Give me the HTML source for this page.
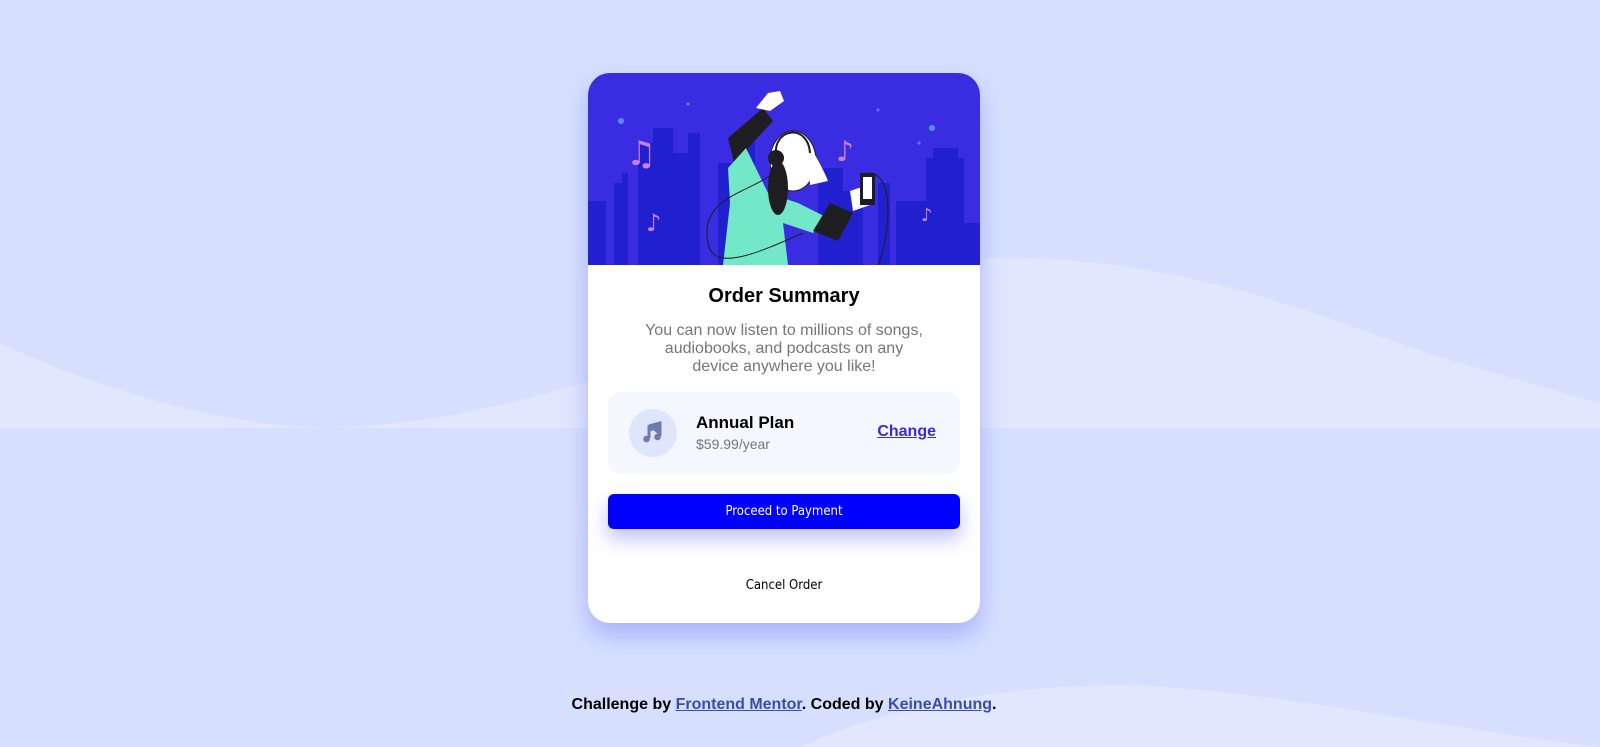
<!DOCTYPE html>
<html><head><meta charset="utf-8"><style>
html,body{margin:0;padding:0}
body{width:1600px;height:747px;background:#d6e0fe;position:relative;overflow:hidden;font-family:"Liberation Sans",sans-serif}
svg.bg{position:absolute;left:0;top:0}
.card{position:absolute;left:588px;top:73px;width:392px;height:550px;background:#fff;border-radius:22px;overflow:hidden;box-shadow:0 12px 24px rgba(90,90,240,0.35)}
.hero{position:absolute;left:0;top:0;width:392px;height:192px}
h1{position:absolute;top:212px;left:0;width:392px;text-align:center;margin:0;font-size:20px;font-weight:bold;color:#000}
.desc{position:absolute;top:249px;left:56px;width:280px;text-align:center;font-size:16px;line-height:18px;color:#767676}
.plan{position:absolute;left:20px;top:319px;width:352px;height:82px;background:#f5f7ff;border-radius:13px}
.ic{position:absolute;left:21px;top:17px;width:48px;height:48px;border-radius:50%;background:#dfe6fb}
.pt{position:absolute;left:88px;top:21px;font-size:17px;font-weight:bold;color:#000}
.pp{position:absolute;left:88px;top:44px;font-size:14px;color:#767676}
.ch{position:absolute;right:24px;top:31px;font-size:16px;font-weight:bold;color:#3a2ad6;text-decoration:underline}
.btn{position:absolute;left:20px;top:421px;width:352px;height:35px;background:#0000ff;border-radius:6px;color:#fff;font-size:13px;text-align:center;line-height:35px;box-shadow:0 10px 20px rgba(0,0,255,0.25);font-family:"DejaVu Sans Condensed","DejaVu Sans",sans-serif}
.cancel{position:absolute;left:0;top:505px;width:392px;text-align:center;font-size:13px;color:#000;font-family:"DejaVu Sans Condensed","DejaVu Sans",sans-serif}
.foot{position:absolute;top:696px;left:0;width:1568px;text-align:center;font-size:16px;font-weight:bold;color:#000}
.foot a{color:#3a4da8;text-decoration:underline}
</style></head><body>
<svg class="bg" width="1600" height="747">
<path d="M0 343 C120 400 250 428 330 428 L0 428Z" fill="#e0e7fe"/>
<path d="M330 428 C600 420 850 260 1000 258 C1200 256 1350 330 1450 360 C1520 380 1570 395 1600 403 L1600 428 Z" fill="#e0e7fe"/>
<path d="M800 747 C900 700 1050 680 1150 686 C1300 695 1450 730 1600 747Z" fill="#e0e7fe"/>
</svg>
<div class="card">
<svg class="hero" viewBox="0 0 392 192">
<rect width="392" height="192" fill="#3a2ce0"/>
<g fill="#2020cf">
<rect x="0" y="128" width="18" height="64"/><rect x="26" y="110" width="14" height="82"/><rect x="34" y="100" width="6" height="20"/>
<rect x="50" y="70" width="30" height="122"/><rect x="65" y="55" width="20" height="137"/><rect x="80" y="80" width="25" height="112"/>
<rect x="100" y="60" width="12" height="132"/><rect x="130" y="90" width="20" height="102"/><rect x="145" y="60" width="22" height="132"/>
<rect x="230" y="95" width="25" height="97"/><rect x="255" y="118" width="20" height="74"/><rect x="290" y="110" width="12" height="82"/>
<rect x="308" y="128" width="30" height="64"/><rect x="338" y="85" width="38" height="107"/><rect x="345" y="75" width="25" height="20"/><rect x="376" y="150" width="16" height="42"/>
</g>
<g fill="#5a8cf5"><circle cx="33" cy="48" r="3"/><circle cx="100" cy="31" r="1.5"/><circle cx="290" cy="37" r="1.5"/><circle cx="344" cy="55" r="3"/><circle cx="331" cy="70" r="1.5"/></g>
<g fill="#c880f0" font-size="34" font-family="DejaVu Sans"><text x="38" y="92">♫</text><text x="248" y="88" font-size="28">♪</text><text x="58" y="158" font-size="24">♪</text><text x="333" y="148" font-size="18">♪</text></g>
<path d="M140 65 L175 35 L185 48 L160 75 L162 100 L150 105Z" fill="#1e1e22"/>
<path d="M168 35 L180 20 L192 18 L196 28 L182 38Z" fill="#fff"/>
<path d="M140 95 L158 75 L180 120 L210 130 L240 145 L225 160 L195 150 L200 192 L135 192 L142 130Z" fill="#72e8c8"/>
<ellipse cx="205" cy="88" rx="23" ry="30" fill="#fff" stroke="#1e1e22"/>
<path d="M220 70 Q235 95 240 108 L222 112Z" fill="#fff"/>
<ellipse cx="190" cy="115" rx="10" ry="27" fill="#1e1e22"/>
<circle cx="188" cy="85" r="8" fill="#1e1e22"/>
<path d="M188 82 C185 55 220 50 222 80" stroke="#1e1e22" fill="none" stroke-width="2"/>
<path d="M225 158 L242 130 L265 140 L250 168Z" fill="#1e1e22"/>
<path d="M262 118 L280 112 L282 132 L265 138Z" fill="#fff"/>
<rect x="272" y="100" width="15" height="32" fill="#1e1e22"/><rect x="275" y="104" width="9" height="22" fill="#fff"/>
<path d="M190 95 C170 120 110 120 120 170 C125 200 170 180 215 160 M280 100 C310 100 300 170 290 192" stroke="#1e1e22" fill="none" stroke-width="1"/>
</svg>
<h1>Order Summary</h1>
<div class="desc">You can now listen to millions of songs, audiobooks, and podcasts on any device anywhere you like!</div>
<div class="plan">
<div class="ic"><svg width="48" height="48" viewBox="0 0 48 48"><path d="M20 17 L31 14 L31 27 M20 17 L20 29 M20 17.5 L31 14.5 L31 18 L20 21Z" stroke="#6d7bab" stroke-width="3" fill="#6d7bab"/><circle cx="17.5" cy="30" r="3.3" fill="#6d7bab"/><circle cx="28.5" cy="28" r="3.3" fill="#6d7bab"/></svg></div>
<div class="pt">Annual Plan</div>
<div class="pp">$59.99/year</div>
<div class="ch">Change</div>
</div>
<div class="btn">Proceed to Payment</div>
<div class="cancel">Cancel Order</div>
</div>
<div class="foot">Challenge by <a>Frontend Mentor</a>. Coded by <a>KeineAhnung</a>.</div>
</body></html>
